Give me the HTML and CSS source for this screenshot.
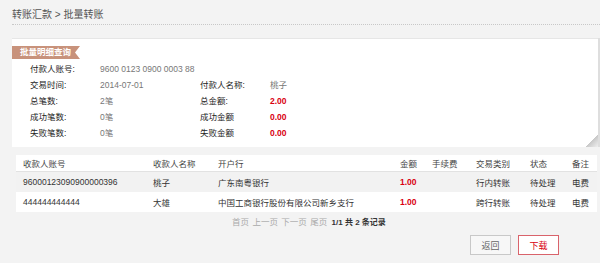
FILE: index.html
```html
<!DOCTYPE html>
<html lang="zh-CN">
<head>
  <meta charset="UTF-8" />
  <title>批量转账</title>
  <link rel="stylesheet" href="styles.css">
</head>
<body>

  <div class="crumb">转账汇款 &gt; 批量转账</div>

  <div class="card">
    <div class="ribbon">批量明细查询</div>
    <div class="info">
      <span class="label">付款人账号:</span>
      <span class="value wide">9600 0123 0900 0003 88</span>

      <span class="label">交易时间:</span>
      <span class="value">2014-07-01</span>
      <span class="label">付款人名称:</span>
      <span class="value">桃子</span>

      <span class="label">总笔数:</span>
      <span class="value">2笔</span>
      <span class="label">总金额:</span>
      <span class="value money">2.00</span>

      <span class="label">成功笔数:</span>
      <span class="value">0笔</span>
      <span class="label">成功金额</span>
      <span class="value money">0.00</span>

      <span class="label">失败笔数:</span>
      <span class="value">0笔</span>
      <span class="label">失败金额</span>
      <span class="value money">0.00</span>
    </div>
    <div class="fold"></div>
  </div>

  <table class="list">
    <colgroup>
      <col style="width:130px">
      <col style="width:65px">
      <col style="width:182px">
      <col style="width:32px">
      <col style="width:44px">
      <col style="width:54px">
      <col style="width:42px">
      <col>
    </colgroup>
    <thead>
      <tr>
        <th>收款人账号</th>
        <th>收款人名称</th>
        <th>开户行</th>
        <th>金额</th>
        <th>手续费</th>
        <th>交易类别</th>
        <th>状态</th>
        <th>备注</th>
      </tr>
    </thead>
    <tbody>
      <tr>
        <td>96000123090900000396</td>
        <td>桃子</td>
        <td>广东南粤银行</td>
        <td class="money">1.00</td>
        <td></td>
        <td>行内转账</td>
        <td>待处理</td>
        <td>电费</td>
      </tr>
      <tr>
        <td>444444444444</td>
        <td>大雄</td>
        <td>中国工商银行股份有限公司新乡支行</td>
        <td class="money">1.00</td>
        <td></td>
        <td>跨行转账</td>
        <td>待处理</td>
        <td>电费</td>
      </tr>
    </tbody>
  </table>

  <div class="pager">
    <span class="off">首页</span>
    <span class="off">上一页</span>
    <span class="off">下一页</span>
    <span class="off">尾页</span>
    <span class="count">1/1 共 2 条记录</span>
  </div>

  <div class="actions">
    <button class="btn">返回</button>
    <button class="btn primary">下载</button>
  </div>

</body>
</html>
```

FILE: styles.css
```css
body {
  margin: 0;
  background-color: #f3f3f3;
  font-family: "Liberation Sans", "Noto Sans CJK SC", sans-serif;
  font-size: 8.5px;
  color: #333;
}

.crumb {
  margin-left: 12px;
  padding-top: 9px;
  padding-bottom: 3px;
  font-size: 10px;
  line-height: 12px;
  color: #555;
  border-bottom: 1px dotted #c8c8c8;
}

.card {
  position: relative;
  margin: 13px 2px 0 12px;
  padding: 7px 0 6px;
  background-color: #fff;
  border-top: 1px solid #e6e6e6;
  box-shadow: 2px 0 0 #dedede;
}

.ribbon {
  width: 60px;
  height: 13px;
  padding-left: 8px;
  line-height: 13px;
  font-weight: bold;
  color: #fff;
  background-color: #c8927b;
  clip-path: polygon(0 0, 100% 0, calc(100% - 5px) 50%, 100% 100%, 0 100%);
}

.info {
  display: grid;
  grid-template-columns: 70px 100px 70px auto;
  margin: 2px 0 0 18px;
  line-height: 16px;
}

.label {
  color: #222;
}

.value {
  color: #777;
}

.value.wide {
  grid-column: 2 / 5;
}

.money {
  color: #d9000f;
  font-weight: bold;
}

.fold {
  position: absolute;
  right: 0;
  bottom: 0;
  width: 12px;
  height: 12px;
  background: linear-gradient(135deg, #fff 0, #fff 50%, #c9c9c9 50%, #efefef 100%);
}

.list {
  margin: 8px 3px 0 16px;
  width: 581px;
  table-layout: fixed;
  border-collapse: collapse;
}

.list th,
.list td {
  padding: 0 0 0 7px;
  text-align: left;
  font-weight: normal;
  white-space: nowrap;
  overflow: hidden;
}

.list th {
  height: 16px;
  color: #444;
  background-color: #fff;
  border-bottom: 1px solid #e2e2e2;
}

.list td {
  height: 20px;
  color: #333;
}

.list td.money {
  font-weight: bold;
  color: #d9000f;
}

.list tbody tr:nth-child(odd) {
  background-color: #f2f2f2;
}

.list tbody tr:nth-child(even) {
  background-color: #fff;
}

.pager {
  margin: 4px 0 0 232px;
  line-height: 12px;
}

.pager .off {
  color: #aaa;
  margin-right: 1px;
}

.pager .count {
  margin-left: 1px;
  color: #333;
  font-weight: bold;
  font-size: 8px;
}

.actions {
  display: flex;
  justify-content: flex-end;
  gap: 7px;
  margin: 6px 41px 0 0;
}

.btn {
  width: 41px;
  height: 20px;
  padding: 0;
  border: 1px solid #c8c8c8;
  background-color: #f7f7f7;
  font-family: "Liberation Sans", "Noto Sans CJK SC", sans-serif;
  font-size: 9px;
  color: #666;
  cursor: pointer;
}

.btn.primary {
  border-color: #d9636b;
  background-color: #fff;
  color: #d9000f;
}
```
